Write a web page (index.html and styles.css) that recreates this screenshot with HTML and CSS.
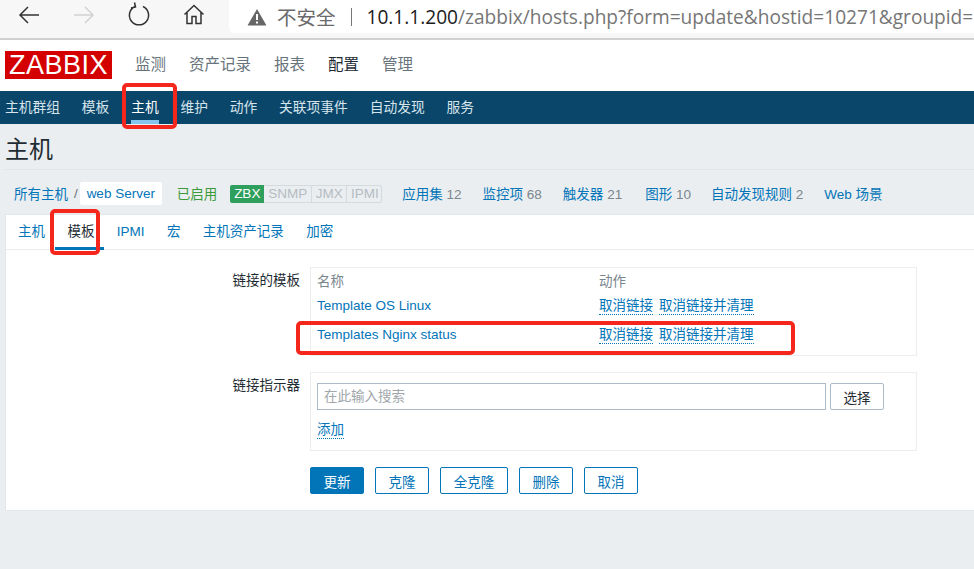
FILE: index.html
```html
<!DOCTYPE html>
<html lang="zh">
<head>
<meta charset="utf-8">
<title>主机</title>
<link rel="stylesheet" href="styles.css">
</head>
<body>
<div class="browser">
  <div class="browser-icons">
    <svg class="bicon" width="24" height="24" viewBox="0 0 24 24"><path d="M22 13H3M11 5l-8 8 8 8" fill="none" stroke="#333" stroke-width="1.5"/></svg>
    <svg class="bicon" width="24" height="24" viewBox="0 0 24 24"><path d="M2 13h19M13 5l8 8-8 8" fill="none" stroke="#d2d2d2" stroke-width="1.5"/></svg>
    <svg class="bicon" width="24" height="24" viewBox="0 0 24 24"><path d="M16 4.500a9.600 9.600 0 1 1-8 0M7.500 0.500l1 4.500-4.500 1" fill="none" stroke="#333" stroke-width="1.500"/></svg>
    <svg class="bicon" width="24" height="24" viewBox="0 0 24 24"><path d="M2.500 12.500L12 3.500l9.500 9M5 10.500v11h5v-7h4v7h5v-11" fill="none" stroke="#333" stroke-width="1.500"/></svg>
  </div>
  <div class="address">
    <svg class="warn" width="20" height="18" viewBox="0 0 20 18"><path d="M10 1L19.500 17.500H.5z" fill="#666"/><path d="M9 6h2v6H9zM9 13.500h2v2H9z" fill="#fff"/></svg>
    <span class="insecure">不安全</span>
    <span class="sep"></span>
    <span class="url"><span class="host">10.1.1.200</span>/zabbix/hosts.php?form=update&amp;hostid=10271&amp;groupid=</span>
  </div>
</div>

<header class="top">
  <div class="logo">ZABBIX</div>
  <nav class="top-menu">
    <a>监测</a><a>资产记录</a><a>报表</a><a class="current">配置</a><a>管理</a>
  </nav>
</header>

<nav class="sub-menu">
  <a>主机群组</a><a>模板</a><a class="active">主机</a><a>维护</a><a>动作</a><a>关联项事件</a><a>自动发现</a><a>服务</a>
</nav>

<main class="content">
  <h1 class="title">主机</h1>

  <div class="crumbs">
    <a class="crumb">所有主机</a>
    <span class="slash">/</span>
    <a class="crumb-box">web Server</a>
    <span class="enabled">已启用</span>
    <div class="badges">
      <span class="badge on">ZBX</span><span class="badge b-snmp">SNMP</span><span class="badge b-jmx">JMX</span><span class="badge b-ipmi">IPMI</span>
    </div>
    <a class="stat s-app">应用集 <em>12</em></a>
    <a class="stat s-item">监控项 <em>68</em></a>
    <a class="stat s-trig">触发器 <em>21</em></a>
    <a class="stat s-graph">图形 <em>10</em></a>
    <a class="stat s-disc">自动发现规则 <em>2</em></a>
    <a class="stat s-web">Web 场景</a>
  </div>

  <section class="panel">
    <div class="tabs">
      <a>主机</a><a class="active">模板</a><a>IPMI</a><a>宏</a><a>主机资产记录</a><a>加密</a>
    </div>

    <div class="form-row">
      <div class="label">链接的模板</div>
      <div class="box linked">
        <div class="t-row head"><span class="t-name">名称</span><span>动作</span></div>
        <div class="t-row"><a class="t-name">Template OS Linux</a><span class="acts"><a class="dotted">取消链接</a><a class="dotted">取消链接并清理</a></span></div>
        <div class="t-row"><a class="t-name">Templates Nginx status</a><span class="acts"><a class="dotted">取消链接</a><a class="dotted">取消链接并清理</a></span></div>
      </div>
    </div>

    <div class="form-row second">
      <div class="label">链接指示器</div>
      <div class="box search">
        <div class="search-line">
          <input class="search-input" type="text" placeholder="在此输入搜索">
          <button class="btn plain select" type="button">选择</button>
        </div>
        <a class="dotted add">添加</a>
      </div>
    </div>

    <div class="actions">
      <button class="btn primary" type="button">更新</button>
      <button class="btn" type="button">克隆</button>
      <button class="btn wide" type="button">全克隆</button>
      <button class="btn" type="button">删除</button>
      <button class="btn" type="button">取消</button>
    </div>
  </section>
</main>

<div class="mark mark-nav"></div>
<div class="mark mark-tab"></div>
<div class="mark mark-row"></div>
</body>
</html>
```

FILE: styles.css
```css
* { box-sizing: border-box; }
html, body { margin: 0; padding: 0; }
body {
  width: 974px;
  height: 569px;
  overflow: hidden;
  position: relative;
  background: #ebeef0;
  font-family: "Liberation Sans", "Noto Sans CJK SC", sans-serif;
  font-size: 13.5px;
  color: #1f2c33;
}
a { color: #0275b8; text-decoration: none; }

/* browser chrome */
.browser {
  height: 40px;
  background: #f7f7f7;
  border-bottom: 2px solid #d0d0d0;
  display: flex;
  overflow: hidden;
}
.browser-icons {
  width: 229px;
  display: flex;
  padding: 2px 0 0 17px;
  gap: 31px;
}
.bicon { display: block; }
.address {
  flex: 1;
  height: 33px;
  background: #fff;
  border-bottom-left-radius: 6px;
  display: flex;
  align-items: center;
  padding-left: 18px;
  white-space: nowrap;
  overflow: hidden;
  font-family: "Open Sans", "Noto Sans CJK SC", sans-serif;
}
.warn { flex: none; margin-right: 10px; }
.insecure { font-size: 19.500px; color: #6a6a6a; }
.sep { width: 1px; height: 18px; background: #777; margin: 0 15px; flex: none; }
.url { font-size: 19.100px; color: #767676; }
.host { color: #1c1c1c; }

/* top header */
.top {
  height: 51px;
  background: #fff;
  display: flex;
  padding: 11px 0 0 5px;
}
.logo {
  width: 107px;
  height: 28px;
  background: #d40000;
  color: #fff;
  font-size: 27px;
  line-height: 28px;
  text-align: center;
  letter-spacing: 0.500px;
}
.top-menu {
  display: flex;
  gap: 23px;
  margin-left: 23px;
  font-size: 15.500px;
  line-height: 28px;
}
.top-menu a { color: #68747c; position: relative; }
.top-menu a.current { color: #1f2c33; }
.top-menu a.current::after {
  content: "";
  position: absolute;
  left: 5px;
  top: 43px;
  border: 10px solid transparent;
  border-top: 0;
  border-bottom: 9px solid #0a466a;
}

/* second level nav */
.sub-menu {
  height: 33px;
  background: #0a466a;
  display: flex;
  gap: 21.800px;
  padding-left: 5px;
  line-height: 33px;
  font-size: 13.750px;
}
.sub-menu a { color: #d6e4ec; position: relative; }
.sub-menu a.active { color: #fff; }
.sub-menu a.active::after {
  content: "";
  position: absolute;
  left: 0;
  right: 0;
  bottom: 0;
  height: 4px;
  background: #84c5ee;
}

/* page content */
.content { padding-left: 5px; }
.title {
  margin: 0;
  height: 46px;
  padding: 11px 0 0 0;
  font-size: 24px;
  line-height: 29px;
  font-weight: normal;
  color: #1f2c33;
  border-bottom: 1px solid #dfe4e7;
}
.crumbs {
  height: 44px;
  display: flex;
  align-items: center;
  padding: 2px 0 0 9px;
  white-space: nowrap;
}
.slash { margin: 0 2px 0 6px; color: #68747c; }
.crumb-box {
  width: 82px;
  height: 23px;
  line-height: 23px;
  background: #fff;
  text-align: center;
  border-radius: 2px;
}
.enabled { margin-left: 15px; color: #3a9a3a; }
.badges {
  margin: 1px 0 0 13px;
  display: flex;
  height: 18px;
  width: 152px;
  border: 1px solid #d5dadd;
  border-radius: 2px;
  font-size: 13.500px;
  line-height: 16px;
}
.badge {
  color: #b4bcc2;
  border-left: 1px solid #d5dadd;
  flex: none;
  text-align: center;
}
.badge.on {
  width: 34px;
  margin: -1px 0 -1px -1px;
  background: #2f9f5d;
  color: #fff;
  line-height: 18px;
  border: 0;
  border-radius: 2px 0 0 2px;
}
.b-snmp { width: 47px; border-left: 0; }
.b-jmx { width: 35px; }
.b-ipmi { width: 36px; }
.stat { margin-left: 20px; }
.stat em { font-style: normal; color: #7a868e; }
.s-app { margin-left: 20px; }
.s-item, .s-trig { margin-left: 21px; }
.s-graph { margin-left: 23px; }
.s-web { margin-left: 21px; }

/* tab panel */
.panel {
  height: 297px;
  background: #fff;
  border: 1px solid #e3e7ea;
  border-right: 0;
}
.tabs {
  height: 35px;
  display: flex;
  gap: 22.400px;
  padding-left: 12px;
  line-height: 33px;
  border-bottom: 1px solid #ebeef0;
}
.tabs a { position: relative; }
.tabs a.active { color: #1f2c33; }
.tabs a.active::after {
  content: "";
  position: absolute;
  left: -12px;
  right: -10px;
  bottom: -1px;
  height: 3px;
  background: #0275b8;
}

.form-row {
  display: flex;
  margin-top: 17px;
}
.form-row.second { margin-top: 16px; }
.label {
  width: 294px;
  text-align: right;
  padding-top: 5px;
  line-height: 18px;
}
.box {
  width: 607px;
  margin-left: 10px;
  border: 1px solid #ebeef0;
}
.linked { height: 89px; padding-top: 4px; }
.t-row {
  display: flex;
  height: 29px;
  line-height: 18px;
  padding: 5px 0 0 6px;
}
.t-row.head { height: 20px; padding-top: 1px; color: #7a868e; }
.t-name { width: 282px; }
.acts { display: flex; gap: 6px; }
.dotted {
  border-bottom: 1px dotted #0275b8;
  height: 18px;
  line-height: 18px;
}
.search { height: 79px; padding: 10px 0 0 6px; }
.search-line { display: flex; gap: 4px; }
.search-input {
  width: 509px;
  height: 27px;
  border: 1px solid #acbbc7;
  padding: 0 6px;
  font: inherit;
  outline: 0;
}
.search-input::placeholder { color: #a0a6aa; opacity: 1; }
.add { display: inline-block; margin-top: 11px; }

.btn {
  width: 54px;
  height: 27px;
  border: 1px solid #0275b8;
  border-radius: 2px;
  background: #fff;
  color: #0275b8;
  font: inherit;
  padding: 0;
}
.btn.wide { width: 68px; }
.btn.primary { background: #0275b8; color: #fff; }
.btn.plain { border-color: #acbbc7; color: #1f2c33; }
.actions {
  display: flex;
  gap: 11px;
  margin: 16px 0 0 304px;
}

/* red annotations drawn over the screenshot */
.mark {
  position: absolute;
  border: 4px solid #f5261b;
  border-radius: 5px;
}
.mark-nav { left: 122px; top: 83px; width: 55px; height: 46px; }
.mark-tab { left: 50px; top: 209px; width: 50px; height: 46px; }
.mark-row { left: 296px; top: 321px; width: 499px; height: 34px; }
```
